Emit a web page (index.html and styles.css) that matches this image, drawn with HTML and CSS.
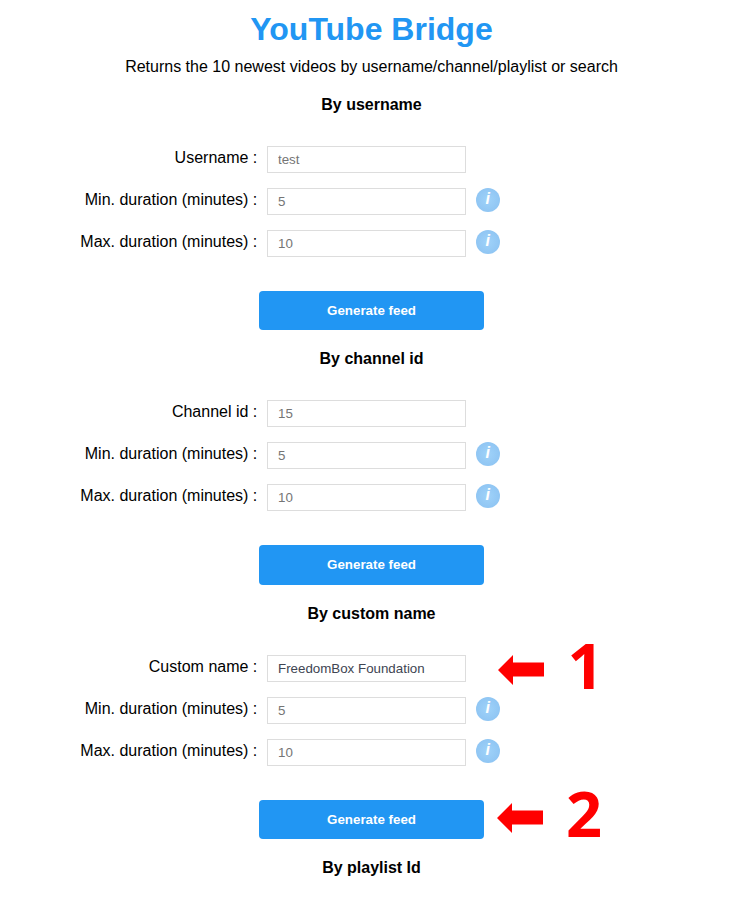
FILE: index.html
```html
<!DOCTYPE html>
<html lang="en">
<head>
<meta charset="utf-8">
<title>YouTube Bridge</title>
<link rel="stylesheet" href="styles.css">
</head>
<body>
<main class="card">
<h1>YouTube Bridge</h1>
<p class="description">Returns the 10 newest videos by username/channel/playlist or search</p>
<h5>By username</h5>
<form>
<div class="parameters">
<label for="u">Username :</label><input id="u" placeholder="test"><span></span>
<label for="a1">Min. duration (minutes) :</label><input id="a1" placeholder="5"><i class="info">i</i>
<label for="b1">Max. duration (minutes) :</label><input id="b1" placeholder="10"><i class="info">i</i>
</div>
<button type="button">Generate feed</button>
</form>
<h5>By channel id</h5>
<form>
<div class="parameters">
<label for="c">Channel id :</label><input id="c" placeholder="15"><span></span>
<label for="a2">Min. duration (minutes) :</label><input id="a2" placeholder="5"><i class="info">i</i>
<label for="b2">Max. duration (minutes) :</label><input id="b2" placeholder="10"><i class="info">i</i>
</div>
<button type="button" class="tall">Generate feed</button>
</form>
<h5>By custom name</h5>
<form>
<div class="parameters">
<label for="n">Custom name :</label><input id="n" value="FreedomBox Foundation"><span></span>
<label for="a3">Min. duration (minutes) :</label><input id="a3" placeholder="5"><i class="info">i</i>
<label for="b3">Max. duration (minutes) :</label><input id="b3" placeholder="10"><i class="info">i</i>
</div>
<button type="button">Generate feed</button>
</form>
<h5>By playlist Id</h5>
<svg class="arrow first" viewBox="0 0 46 30"><path d="M0 15 15 0V7.5H46V21.5H15V30Z"/></svg>
<span class="step one">1</span>
<svg class="arrow second" viewBox="0 0 46 30"><path d="M0 15 15 0V7.5H46V21.5H15V30Z"/></svg>
<span class="step two">2</span>
</main>
</body>
</html>
```
FILE: styles.css
```css
* { box-sizing: border-box; }
body { margin: 0; background: #fff; color: #000; font: 16px/20px "Liberation Sans", Arial, sans-serif; }
.card { position: relative; width: 743px; height: 908px; overflow: hidden; padding-top: 9px; text-align: center; }
h1 { margin: 0; font-size: 32px; line-height: 40px; color: #2196f3; }
.description { margin: 8px 0 0; }
h5 { margin: 18px 0 0; font-size: 16px; line-height: 20px; }
form { margin: 0; }
form + h5 { margin-top: 19px; }
.parameters { display: grid; grid-template-columns: 257.3px 199px 24px; column-gap: 9.7px; row-gap: 15px; grid-auto-rows: 27px; margin-top: 31px; }
label { text-align: right; line-height: 24px; }
input { width: 199px; height: 27px; margin: 0; padding: 0 10px; border: 1px solid #ddd; border-radius: 0; background: #fff; color: #404552; font: 13.333px "Liberation Sans", Arial, sans-serif; }
input::placeholder { color: #757575; opacity: 1; }
.info { width: 24px; height: 24px; border-radius: 50%; background: radial-gradient(circle, #9fd2f9, #8fc5f3 75%); color: #fff; font-weight: 700; line-height: 22px; }
button { display: block; width: 225px; height: 39px; margin: 34px auto 0; padding: 0; border: 0; border-radius: 4px; background: #2196f3; color: #fff; font: bold 13.333px "Liberation Sans", Arial, sans-serif; }
button.tall { height: 40px; padding-bottom: 1px; }
.arrow { position: absolute; width: 46px; height: 30px; fill: #f00; }
.first { left: 498px; top: 655px; }
.second { left: 497px; top: 803px; }
.step { position: absolute; color: #f00; font: bold 63px/64px "Open Sans", sans-serif; }
.one { left: 567.5px; top: 633px; }
.two { left: 566px; top: 781px; }
```
